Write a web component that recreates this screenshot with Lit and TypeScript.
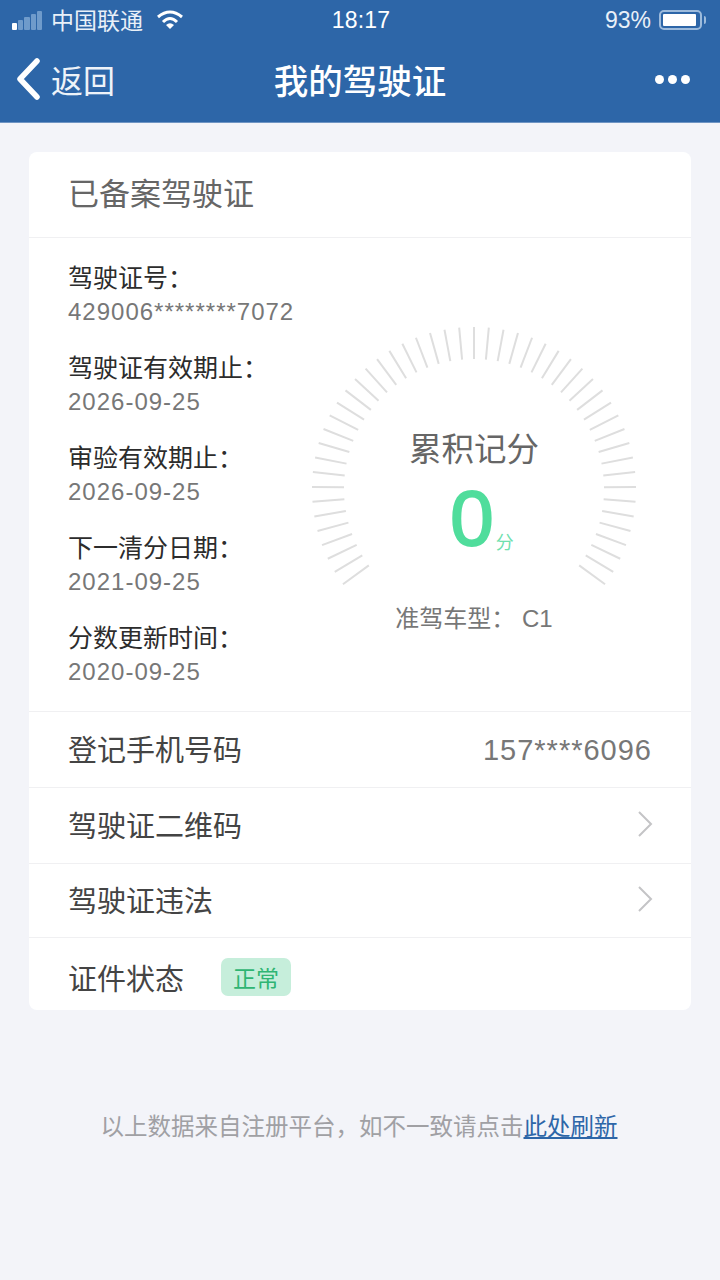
import { LitElement, html, css, svg } from "lit";
import { customElement } from "lit/decorators.js";

const CX = 165, CY = 165, R1 = 130, R2 = 162;
const COUNT = 49;
const START = -126, STEP = 252 / (COUNT - 1);

@customElement("app-root")
export class AppRoot extends LitElement {
  static styles = css`
    :host { display: block; width: 720px; height: 1280px; background: #f3f4f9; overflow: hidden;
      font-family: "Liberation Sans", "Noto Sans CJK SC", sans-serif; color: #666; }
    .top { background: #2d66a8; height: 123px; color: #fff; box-sizing: border-box; border-bottom: 1px solid #6f95c4; }
    .status { height: 40px; display: flex; align-items: center; padding: 0 14px 0 12px; font-size: 23px; position: relative; color: #e9f0f8; }
    .signal { display: flex; align-items: flex-end; gap: 1px; height: 20px; margin-right: 8px; width: 31px; }
    .signal i { display: block; width: 5.200px; border-radius: 1px; background: #6f9bcb; }
    .signal i:first-child { background: #fff; }
    .carrier { font-size: 23px; margin-right: 13px; position: relative; top: -1px; }
    .time { position: absolute; left: 2px; right: 0; top: 6px; text-align: center; font-size: 23px; line-height: 28px; color: #fff; letter-spacing: .2px; }
    .grow { flex: 1; }
    .pct { font-size: 23px; margin-right: 8px; }
    .bat { width: 43px; height: 20px; border: 2px solid #9dbbdc; border-radius: 5px; box-sizing: border-box; padding: 2px; margin-right: 2px; }
    .bat b { display: block; width: 94%; height: 100%; background: #fff; border-radius: 1px; }
    .nub { width: 2px; height: 8px; background: #9dbbdc; border-radius: 0 2px 2px 0; }
    .nav { height: 78px; margin-top: 0; display: flex; align-items: center; position: relative; padding: 0 30px 0 15px; }
    .back { font-size: 32px; margin-left: 10px; color: #eef3f9; }
    .title { position: absolute; left: 0; right: 0; text-align: center; font-size: 34.500px; font-weight: 500; color: #fff; }
    .dots { display: flex; gap: 4px; }
    .dots i { display: block; width: 9px; height: 9px; border-radius: 50%; background: #fff; }
    .card { margin: 29px 29px 0; background: #fff; border-radius: 8px; }
    .head { height: 86px; box-sizing: border-box; display: flex; align-items: center; padding: 0 0 6px 39px; font-size: 31px; color: #666; border-bottom: 1px solid #f0f0f2; }
    .body { height: 474px; display: flex; border-bottom: 1px solid #f0f0f2; box-sizing: border-box; }
    .info { padding: 24px 0 0 39px; width: 243px; flex: none; }
    .item { height: 90px; }
    .label { font-size: 25px; line-height: 32px; color: #2c2c2c; white-space: nowrap; }
    .val { font-size: 24px; line-height: 34px; color: #777; letter-spacing: 1px; margin-top: 1px; white-space: nowrap; }
    .gauge { flex: none; width: 330px; height: 380px; margin-top: 86px; margin-left: -2px; position: relative; display: flex; flex-direction: column; align-items: center; }
    .gauge svg { position: absolute; left: 0; top: 0; }
    .g-title { position: relative; margin-top: 104px; font-size: 32.500px; line-height: 44px; color: #666; }
    .g-num { position: relative; height: 84px; margin-top: 2px; font-size: 78px; line-height: 88px; color: #50dd9c; -webkit-text-stroke: 2px #50dd9c; font-family: "Liberation Sans", sans-serif; left: -2px; }
    .g-num span { position: absolute; left: 100%; bottom: 4px; margin-left: 2px; font-size: 18px; line-height: 26px; color: #6fe0ad; -webkit-text-stroke: 0; font-family: "Noto Sans CJK SC", sans-serif; white-space: nowrap; }
    .g-type { position: relative; margin-top: 44px; font-size: 24px; line-height: 34px; color: #777; }
    .row { height: 76px; display: flex; align-items: center; padding: 0 37px 3px 39px; font-size: 29px; color: #444; border-bottom: 1px solid #f0f0f2; box-sizing: border-box; justify-content: space-between; }
    .row.third { height: 74px; }
    .row.last { border-bottom: 0; justify-content: flex-start; height: 72px; padding: 5px 39px 0; }
    .num { color: #777; letter-spacing: 1px; position: relative; top: 2px; right: 2px; }
    .tag { margin-left: 37px; width: 70px; height: 38px; border-radius: 7px; background: #c6eedb; color: #2fb573; font-size: 23px; display: flex; align-items: center; justify-content: center; }
    .foot { margin-top: 101px; padding-right: 2px; text-align: center; font-size: 23.500px; line-height: 32px; color: #a0a0a4; }
    .foot a { color: #2d66a8; text-decoration: underline; }
  `;

  ticks() {
    const lines = [];
    for (let i = 0; i < COUNT; i++) {
      const a = ((START + i * STEP) * Math.PI) / 180;
      const s = Math.sin(a), c = Math.cos(a);
      lines.push(svg`<line x1=${CX + R1 * s} y1=${CY - R1 * c} x2=${CX + R2 * s} y2=${CY - R2 * c}></line>`);
    }
    return lines;
  }

  chevron() {
    return html`<svg width="18" height="28" viewBox="0 0 18 28" fill="none" stroke="#c4c4c6" stroke-width="2"><path d="M3 2 L15 14 L3 26"/></svg>`;
  }

  render() {
    const info = [
      ["驾驶证号：", "429006********7072"],
      ["驾驶证有效期止：", "2026-09-25"],
      ["审验有效期止：", "2026-09-25"],
      ["下一清分日期：", "2021-09-25"],
      ["分数更新时间：", "2020-09-25"],
    ];
    return html`
      <div class="top">
        <div class="status">
          <div class="signal"><i style="height:7px"></i><i style="height:10px"></i><i style="height:13px"></i><i style="height:16px"></i><i style="height:19px"></i></div>
          <span class="carrier">中国联通</span>
          <svg width="28" height="20" viewBox="0 0 28 20" fill="none" stroke="#fff" stroke-width="3"><path d="M2 7 Q14 -3 26 7"/><path d="M7 12 Q14 5 21 12"/><path d="M14 19 L10 15 Q14 11.500 18 15 Z" fill="#fff" stroke="none"/></svg>
          <span class="time">18:17</span>
          <span class="grow"></span>
          <span class="pct">93%</span>
          <div class="bat"><b></b></div><div class="nub"></div>
        </div>
        <div class="nav">
          <svg width="26" height="42" viewBox="0 0 26 42" fill="none" stroke="#fff" stroke-width="5.500" stroke-linecap="round" stroke-linejoin="round"><path d="M22 3 L5 21 L22 39"/></svg>
          <span class="back">返回</span>
          <span class="title">我的驾驶证</span>
          <span class="grow"></span>
          <div class="dots"><i></i><i></i><i></i></div>
        </div>
      </div>
      <div class="card">
        <div class="head">已备案驾驶证</div>
        <div class="body">
          <div class="info">
            ${info.map(([l, v]) => html`<div class="item"><div class="label">${l}</div><div class="val">${v}</div></div>`)}
          </div>
          <div class="gauge">
            <svg width="330" height="330" viewBox="0 0 330 330" stroke="#dedede" stroke-width="2" fill="none">${this.ticks()}</svg>
            <div class="g-title">累积记分</div>
            <div class="g-num">0<span>分</span></div>
            <div class="g-type">准驾车型： C1</div>
          </div>
        </div>
        <div class="row"><span>登记手机号码</span><span class="num">157****6096</span></div>
        <div class="row"><span>驾驶证二维码</span>${this.chevron()}</div>
        <div class="row third"><span>驾驶证违法</span>${this.chevron()}</div>
        <div class="row last"><span>证件状态</span><span class="tag">正常</span></div>
      </div>
      <div class="foot">以上数据来自注册平台，如不一致请点击<a>此处刷新</a></div>
    `;
  }
}
